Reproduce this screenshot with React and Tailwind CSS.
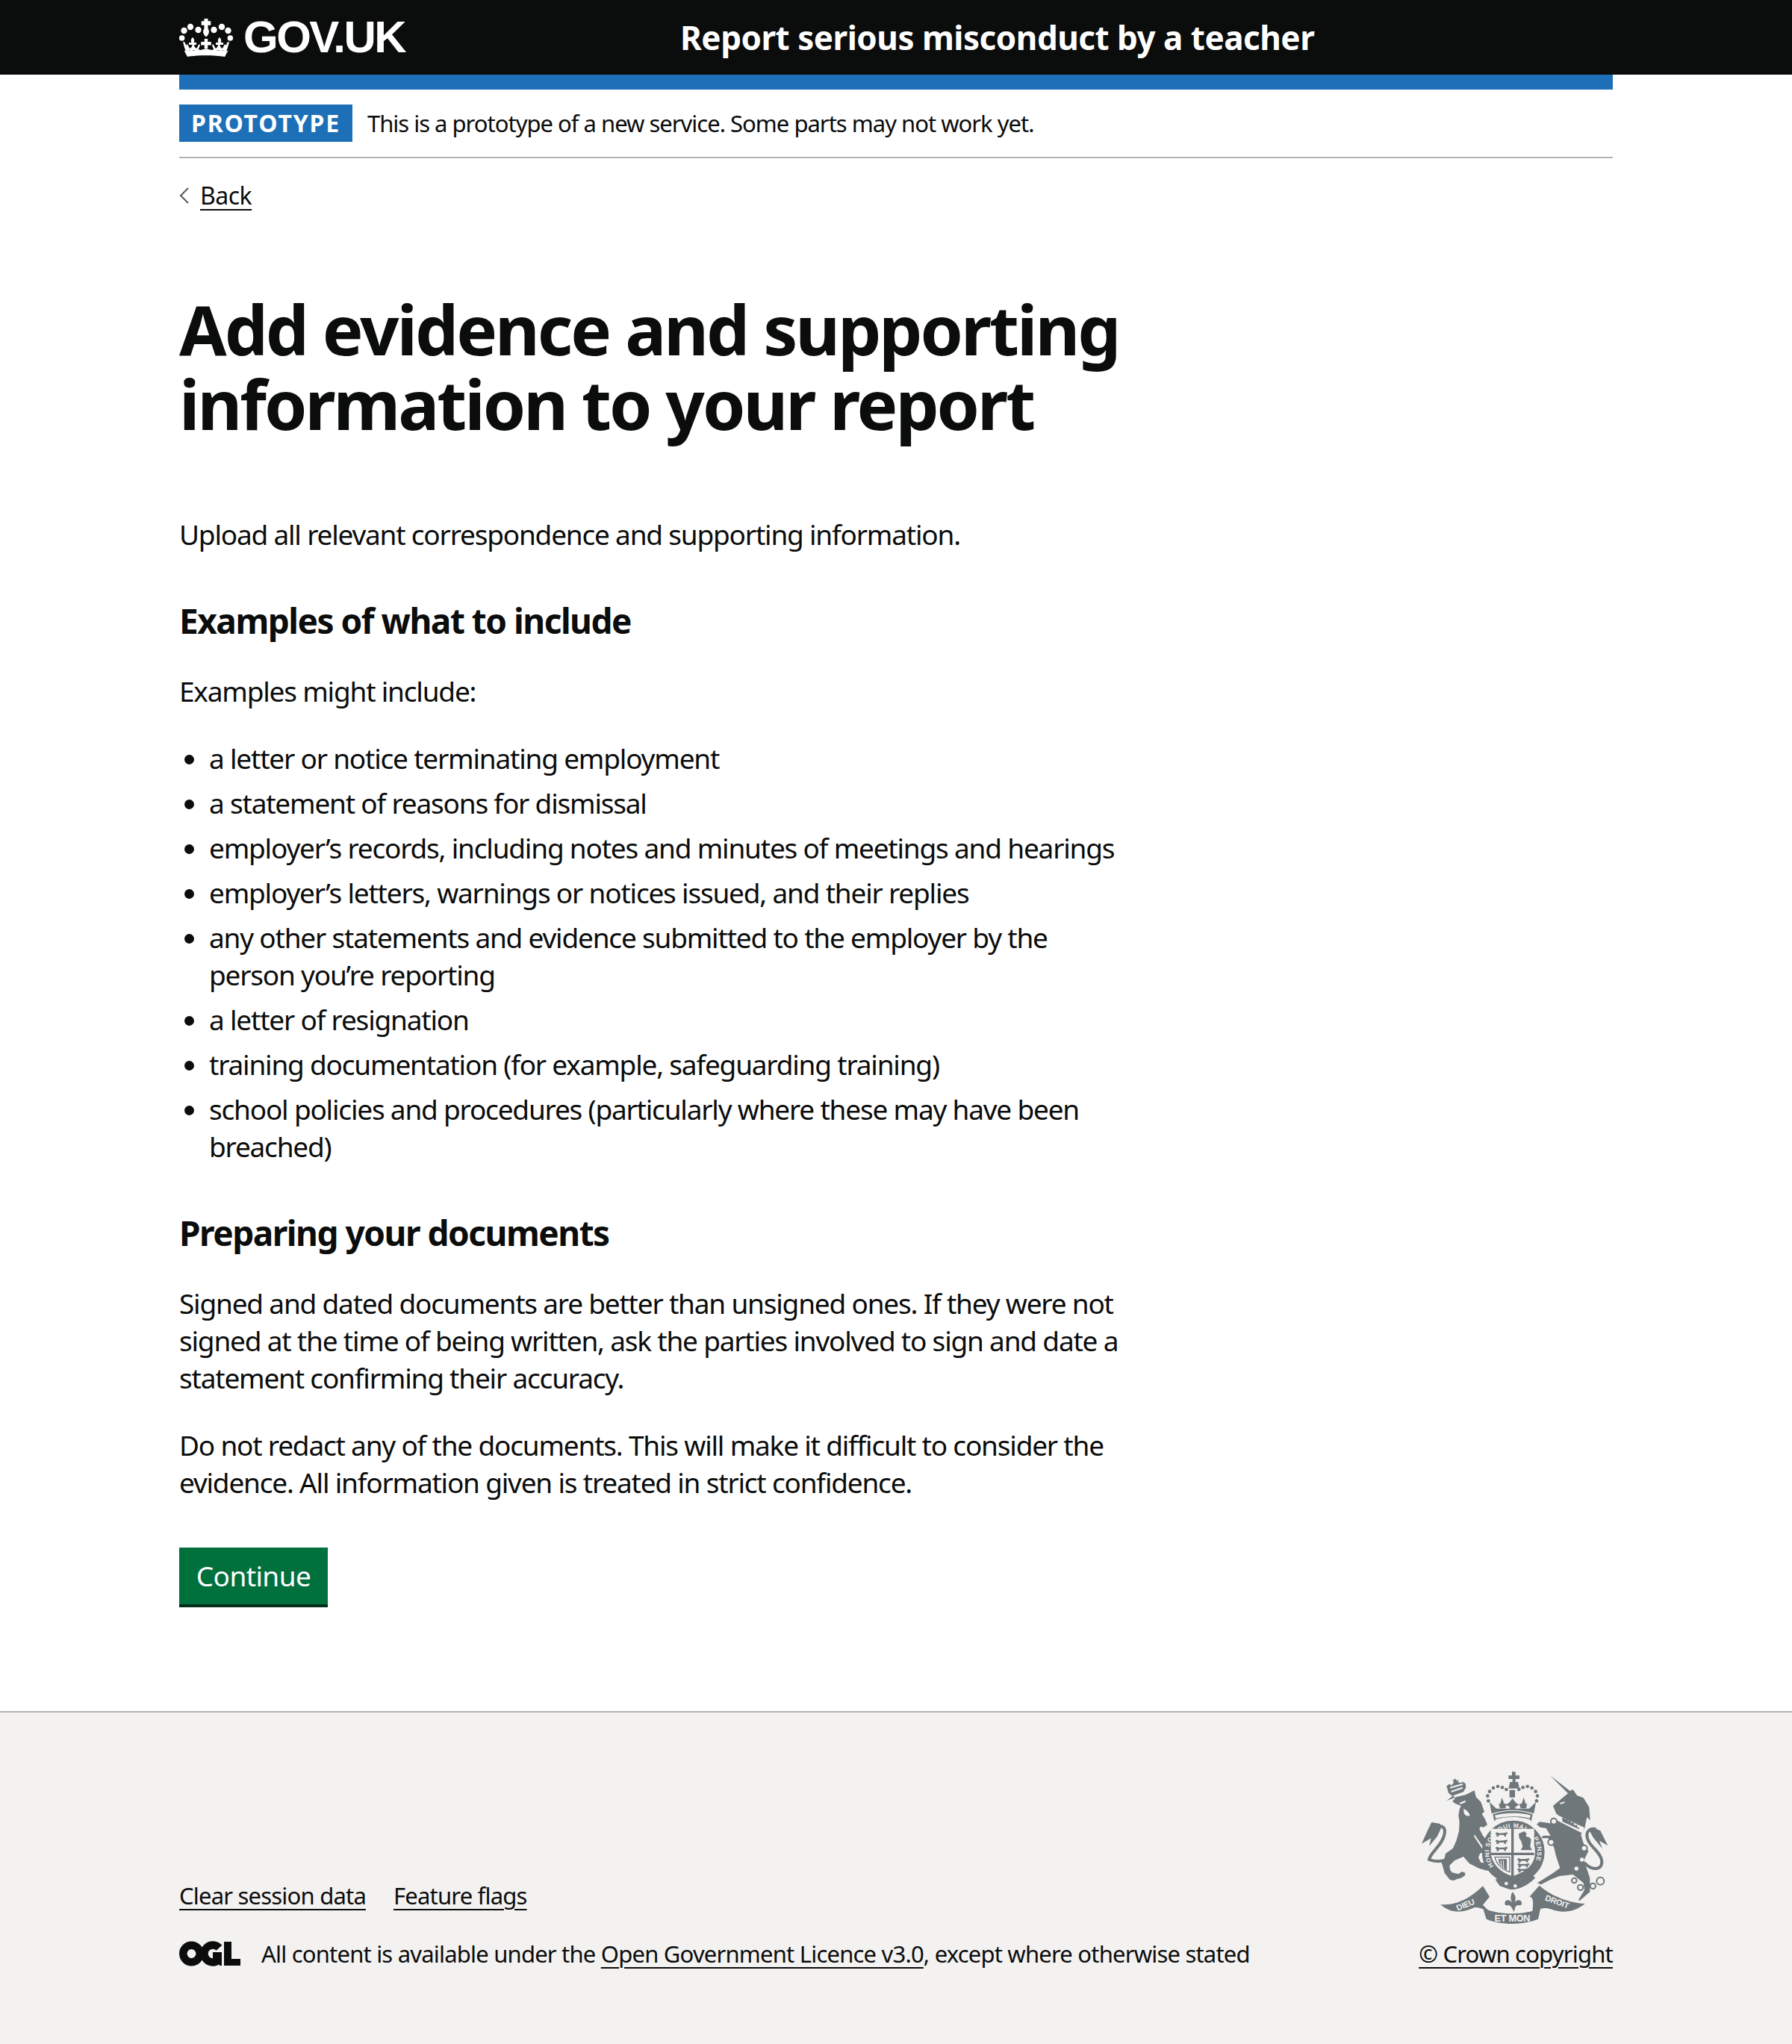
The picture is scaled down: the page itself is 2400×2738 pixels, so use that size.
import React from 'react';

const bodyFont = "font-['Noto_Sans',sans-serif]";

const Crown = () => {
  const side = (
    <g>
      <circle cx="15" cy="11" r="4.2" />
      <circle cx="25.5" cy="15" r="4.2" />
      <circle cx="6.5" cy="16" r="4.2" />
      <circle cx="3.6" cy="26" r="3.8" />
      {/* fleur left */}
      <path d="M18 25c2 2 3 4 1.6 7h3.4v3h-3.2c.4 2 1 3 3.2 5l2-3c0-2 1.6-3 3-2.4-.2 2.4-1.2 4.6-2.8 7.4h-13c-1.6-2.8-2.6-5-2.8-7.4 1.4-.6 3 .4 3 2.4l2 3c2.2-2 2.8-3 3.2-5H13v-3h3.4C15 29 16 27 18 25z" />
      {/* far left sprig */}
      <path d="M5 31c2 0 3.400 1 3.400 3.200l1.600 2.200c.6-.6 1.200-.6 1.800-.4L13 43.500H8.800C7.200 39.500 6 35.500 5 31z" />
    </g>
  );
  return (
    <svg viewBox="0 0 72 51" className="w-[72px] h-[51px] shrink-0 fill-white" aria-hidden="true">
      {side}
      <g transform="translate(72 0) scale(-1 1)">{side}</g>
      <path d="M33.500 0h5v3.200h3.800v5.600h-3.800v4.400c2.200 3 2.200 7 -2.500 11.300-4.700-4.300-4.700-8.300-2.500-11.300V8.800h-3.800V3.200h3.800z" />
      <path d="M33.800 27h4.400v4h4.600v4.600h-4.600v5h-4.400v-5h-4.600V31h4.600z" />
      <path d="M6.500 42.500c1 .5 2.500 1 4 .8 2-.3 3.500-1.300 5.500-1.300 1.500 0 2.500.6 4 .6s3-1.600 5-1.600c1.600 0 2.300 1 3.600 1 1.500 0 2.600-1.200 7.400-1.200s5.900 1.200 7.400 1.200c1.300 0 2-1 3.600-1 2 0 3.500 1.600 5 1.600s2.500-.6 4-.6c2 0 3.500 1 5.500 1.300 1.500.2 3-.3 4-.8l-4.400 8.500c-8-1.300-16-1.800-25.100-1.800s-17.100.5-25.100 1.800z" />
    </svg>
  );
};

const OglLogo = () => (
  <svg viewBox="0 0 82 34" className="w-[82px] h-[34px] shrink-0" aria-hidden="true">
    <circle cx="16.500" cy="17" r="11.200" fill="none" stroke="#0b0c0c" strokeWidth="10.500" />
    <path d="M53.500 9.200A11.500 11.500 0 1 0 53 25.200" fill="none" stroke="#0b0c0c" strokeWidth="10.500" />
    <path d="M45 15h12v18h-3l-1-3-8-4z" fill="#0b0c0c" />
    <path d="M60 1h10v23h12v9H60z" fill="#0b0c0c" />
  </svg>
);

const crestText = {
  fontWeight: 700,
  fill: '#f3f2f1',
  fontFamily: 'Liberation Sans, sans-serif',
  textAnchor: 'middle',
};

// small "passant" lion used in the shield quarters
const ShieldLion = ({ x, y }) => (
  <path transform={`translate(${x} ${y})`} d="M0 4l8-4 6 4 22-1 10-3 4 6-6 3-2 9-6-2-2-5-18 0-4 7-8-1 2-6-4-3z" />
);

const Crest = () => (
  <svg viewBox="0 0 900 900" className="w-[300px] h-[300px] -mr-[20px]" fill="#6f777b" aria-hidden="true">
    {/* lion's crown */}
    <path d="M172 130l12-8 8 6 10-14-6-4 6-6 4-4 6 8 8-2-2 8 8 4 12-4 10 6 2 16-10 18-46 16-14-12z" />
    <path d="M186 134l50-14 2 6-50 14zM190 150l46-16 2 6-46 16z" fill="#f3f2f1" />
    {/* lion */}
    <path d="M172 190l40-16 36-8 36-18 6 26 20 20 14 40-10 8 12 20 10 24-14 10-14-2-4 8 14 28 30 34 10 22-8 10-12-8-12-14-10 4 8 16-18 8-6 16 10 20 28 2 10-4 22 2 6 12-12 4-10 12-20 4-30-8-40-20-24-28-36 16-20 20 2 16 8 12 26 6 14-10 14 6-2 10-16 10-16 4-12 6-16-2-22-28-8-30-6-16 14-14 4-18 30-22 14-32 10-36 2-36-4-28 4-24 6-14-24-10-10-8 10-12-6-12z" />
    <path d="M224 198l22-10 4 6-22 10zM240 222c12 4 22 14 26 26-8 6-18 2-24-8z" fill="#f3f2f1" />
    <path d="M288 322l-2 6 46 66-6 4-44-66z" fill="#f3f2f1" />
    {/* lion's tail */}
    <path d="M206 398c-20 30-66 44-104 28 6-32 54-56 62-104 4-22-6-34-26-30-22 4-36 28-44 42" fill="none" stroke="#6f777b" strokeWidth="12" />
    <path d="M146 282l-34-6-16 32-24 54 38-22-8 32 32-38 16-34z" />
    {/* royal crown */}
    <path d="M421 88h14V73h14v15h16v14h-16v12h10l6 26h-44l6-26h10v-12h-16zM425 146h22v30h-22z" />
    <g>
      <circle cx="340" cy="190" r="7" /><circle cx="337" cy="170" r="7" /><circle cx="345" cy="152" r="7" /><circle cx="360" cy="138" r="7" /><circle cx="378" cy="132" r="7" /><circle cx="396" cy="136" r="7" /><circle cx="412" cy="144" r="7" />
      <circle cx="534" cy="190" r="7" /><circle cx="537" cy="170" r="7" /><circle cx="530" cy="152" r="7" /><circle cx="515" cy="138" r="7" /><circle cx="497" cy="132" r="7" /><circle cx="479" cy="136" r="7" /><circle cx="463" cy="144" r="7" />
    </g>
    <path d="M394 176l10 26 10 0-6 18h-22l-4-18h6zM482 176l-8 26-10 0 6 18h22l4-18h-6zM437 180l12 16 14 10-14 8v10h-24v-10l-14-8 14-10zM345 195c10 8 18 20 28 26h130c10-6 18-18 28-26l-8 46c-60-18-110-18-170 0z" />
    <path d="M358 244c50-18 108-18 160 0l-6 28-6-8c-44-12-92-12-136 0l-6 8z" />
    <path d="M366 248c44-12 100-12 144 0l-4 12c-42-10-94-10-136 0z" fill="#f3f2f1" />
    {/* garter and shield */}
    <circle cx="440" cy="395" r="107" fill="none" stroke="#6f777b" strokeWidth="38" />
    <defs>
      <path id="garter-line" d="M362 452A97 97 0 1 1 518 452" />
    </defs>
    <text fontSize="25" fontWeight="700" fill="#f3f2f1" fontFamily="Liberation Sans, sans-serif">
      <textPath href="#garter-line" textLength="400">HONI SOIT QUI MAL Y PENSE</textPath>
    </text>
    <path d="M350 302h174v100c-6 44-40 78-87 90-46-12-80-46-87-90z" fill="#f3f2f1" />
    <path d="M432 300h10v194h-10zM350 398h174v10H350z" />
    <g>
      <ShieldLion x="368" y="316" /><ShieldLion x="368" y="346" /><ShieldLion x="368" y="374" />
      <ShieldLion x="456" y="420" /><ShieldLion x="456" y="440" /><ShieldLion x="456" y="460" />
      <path d="M462 322l22-10 10 10-4 10 14 4 8 10-4 28 8 14h-46l8-14-6-22-8-12z" />
      <path d="M366 416h60v60c-30-10-52-28-60-60z" fill="#f3f2f1" stroke="#6f777b" strokeWidth="4" />
      <path d="M380 424h34v44c-20-8-32-24-34-44z" />
      <path d="M390 428l4 30M400 428l2 36" stroke="#f3f2f1" strokeWidth="3" fill="none" />
    </g>
    {/* buckle */}
    <path d="M368 506l24-10c36 14 76 6 116-22l20 26c-26 26-62 48-102 46l-40-14z" />
    <circle cx="412" cy="522" r="7" fill="#f3f2f1" /><circle cx="448" cy="532" r="7" fill="#f3f2f1" />
    {/* unicorn */}
    <path d="M588 88L668 150L680 144L696 168L722 178L745 215L749 268L736 256L727 300L712 326L722 360L742 392L724 428L748 500L748 556L706 592L702 588L726 548L722 520L680 486L626 492L590 506L552 526L536 520L562 504L600 480L628 460L612 412L604 378L580 340L552 340L560 330L590 330L572 300L548 296L534 284L546 274L576 278L606 282L628 254L612 240L600 210L640 176L660 160Z" />
    <path d="M624 250l102 48-8 22-104-52z" fill="#f3f2f1" />
    <path d="M636 262l6-8 6 10 8-6 4 12 10-4 2 12 10-2 4 12 10-2 2 12 8-2-2 8-66-30z" />
    <path d="M628 198l20-6-2 6-16 6z" fill="#f3f2f1" />
    {/* unicorn's tail */}
    <path d="M726 438c24 30 72 36 70-6-2-38-62-64-60-106 2-20 20-28 36-22" fill="none" stroke="#6f777b" strokeWidth="12" />
    <path d="M762 298l28 12 30 60-34-20 12 32-36-44-16-28z" />
    {/* chain */}
    <g fill="#f3f2f1" stroke="#6f777b" strokeWidth="6">
      <circle cx="603" cy="272" r="12" /><circle cx="592" cy="356" r="12" /><circle cx="725" cy="380" r="12" /><circle cx="685" cy="510" r="10" /><circle cx="710" cy="538" r="11" /><circle cx="760" cy="532" r="11" /><circle cx="790" cy="512" r="15" />
    </g>
    <circle cx="716" cy="426" r="8" fill="#f3f2f1" /><circle cx="694" cy="462" r="8" fill="#f3f2f1" />
    {/* motto ribbon */}
    <path d="M148 606C210 612 270 580 318 532L345 575L318 608L350 640C320 622 300 618 285 618C240 640 190 645 148 606z" />
    <path d="M545 530C590 570 660 600 728 603C690 635 640 645 590 625C560 615 530 625 515 650C520 610 525 575 505 575z" />
    <path d="M318 620C380 650 490 650 550 620L540 665C480 690 390 690 332 665z" />
    <text x="252" y="618" fontSize="33" transform="rotate(-22 252 618)" style={crestText}>DIEU</text>
    <text x="612" y="606" fontSize="33" transform="rotate(20 612 606)" style={crestText}>DROIT</text>
    <text x="436" y="674" fontSize="38" style={crestText}>ET MON</text>
    {/* fleur */}
    <path d="M437 556c16 18 14 32 6 46 10-16 24-16 30-6 4 10-4 18-14 12l-10 6-6 22-12-22-10-6c-10 6-18-2-14-12 6-10 20-10 30 6-8-14-10-28 0-46z" />
  </svg>
);

const examples = [
  'a letter or notice terminating employment',
  'a statement of reasons for dismissal',
  'employer’s records, including notes and minutes of meetings and hearings',
  'employer’s letters, warnings or notices issued, and their replies',
  'any other statements and evidence submitted to the employer by the person you’re reporting',
  'a letter of resignation',
  'training documentation (for example, safeguarding training)',
  'school policies and procedures (particularly where these may have been breached)',
];

const App = () => (
  <div className={`w-[2400px] min-h-[2738px] bg-white text-[#0b0c0c] flex flex-col ${bodyFont}`}>
    <header className="h-[100px] bg-[#0b0c0c] text-white">
      <div className="w-[1920px] mx-auto h-full flex items-center">
        <div className="w-[671px] flex items-center gap-[14px]">
          <Crown />
          <span className="text-[60px] font-bold tracking-[-2.5px] leading-none font-['Liberation_Sans',sans-serif]">GOV.UK</span>
        </div>
        <span className="text-[44px] font-bold tracking-[-0.5px] leading-none">Report serious misconduct by a teacher</span>
      </div>
    </header>

    <div className="w-[1920px] mx-auto">
      <div className="h-[20px] bg-[#1d70b8]" />
      <div className="py-[20px] border-b-2 border-[#b1b4b6] flex items-center">
        <strong className="bg-[#1d70b8] text-white text-[32px] font-bold tracking-[1.8px] leading-[50px] h-[50px] px-[16px] mr-[20px]">PROTOTYPE</strong>
        <span className="text-[31px] leading-[50px] tracking-[-1px]">This is a prototype of a new service. Some parts may not work yet.</span>
      </div>
      <a className="inline-flex items-center mt-[30px] text-[32px] leading-[40px] tracking-[-0.5px]" href="#">
        <svg viewBox="0 0 14 24" className="w-[14px] h-[24px] mr-[14px]" fill="none" stroke="#505a5f" strokeWidth="2"><path d="M12 2 2 12l10 10" /></svg>
        <span className="underline underline-offset-[6px] decoration-2">Back</span>
      </a>

      <main className="pt-[109px] pb-[139px] w-[1260px]">
        <h1 className="text-[92px] leading-[100px] font-bold tracking-[-3px] mb-[100px]">Add evidence and supporting information to your report</h1>
        <p className="text-[37px] leading-[50px] tracking-[-1.2px] mb-[60px]">Upload all relevant correspondence and supporting information.</p>
        <h2 className="text-[46px] leading-[60px] font-bold tracking-[-1.5px] mb-[40px]">Examples of what to include</h2>
        <p className="text-[37px] leading-[50px] tracking-[-1.2px] mb-[40px]">Examples might include:</p>
        <ul className="list-disc pl-[40px] mb-[60px] text-[37px] leading-[50px] tracking-[-1.2px] flex flex-col gap-[10px]">
          {examples.map((item) => (
            <li key={item}>{item}</li>
          ))}
        </ul>
        <h2 className="text-[46px] leading-[60px] font-bold tracking-[-1.5px] mb-[40px]">Preparing your documents</h2>
        <p className="text-[37px] leading-[50px] tracking-[-1.2px] mb-[40px]">Signed and dated documents are better than unsigned ones. If they were not signed at the time of being written, ask the parties involved to sign and date a statement confirming their accuracy.</p>
        <p className="text-[37px] leading-[50px] tracking-[-1.2px] mb-[62px]">Do not redact any of the documents. This will make it difficult to consider the evidence. All information given is treated in strict confidence.</p>
        <button className="w-[199px] h-[80px] bg-[#00703c] text-white text-[37px] leading-[50px] tracking-[-0.6px] border-b-4 border-[#002d18]">Continue</button>
      </main>
    </div>

    <footer className="flex-1 bg-[#f3f2f1] border-t-2 border-[#b1b4b6] text-[31px] leading-[40px] tracking-[-0.8px]">
      <div className="w-[1920px] mx-auto pt-[55px] flex justify-between items-end">
        <div className="pb-[2px]">
          <div className="flex gap-[37px] mb-[38px]">
            <a className="underline underline-offset-[6px] decoration-2" href="#">Clear session data</a>
            <a className="underline underline-offset-[6px] decoration-2" href="#">Feature flags</a>
          </div>
          <div className="flex items-center gap-[28px]">
            <OglLogo />
            <span>All content is available under the <a className="underline underline-offset-[6px] decoration-2" href="#">Open Government Licence v3.0</a>, except where otherwise stated</span>
          </div>
        </div>
        <div className="flex flex-col items-end">
          <Crest />
          <a className="underline underline-offset-[6px] decoration-2 -mt-[52px] pb-[2px]" href="#">© Crown copyright</a>
        </div>
      </div>
    </footer>
  </div>
);

export default App;
